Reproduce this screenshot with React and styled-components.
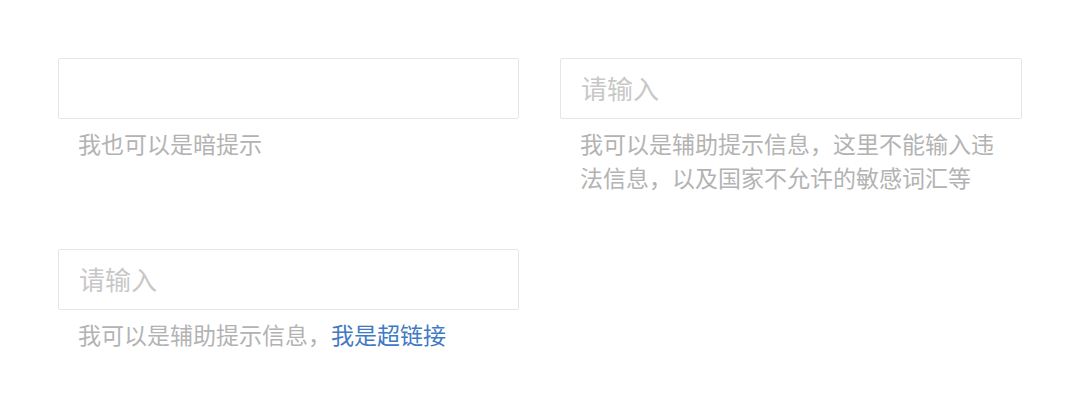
import React from "react";
import styled, { createGlobalStyle } from "styled-components";

const GlobalStyle = createGlobalStyle`
  html, body {
    margin: 0;
    padding: 0;
    background: #ffffff;
  }
  body {
    font-family: "Noto Sans CJK SC", "Noto Sans", sans-serif;
  }
`;

const fields = [
  { placeholder: "", hint: "我也可以是暗提示" },
  {
    placeholder: "请输入",
    hint: "我可以是辅助提示信息，这里不能输入违法信息，以及国家不允许的敏感词汇等",
  },
  { placeholder: "请输入", hint: "我可以是辅助提示信息，", link: "我是超链接" },
];

const App = () => {
  return (
    <>
      <GlobalStyle />
      <Page>
        {fields.map((f, i) => (
          <Field key={i}>
            <Input type="text" placeholder={f.placeholder} />
            <Hint>
              {f.hint}
              {f.link && <Link href="#">{f.link}</Link>}
            </Hint>
          </Field>
        ))}
      </Page>
    </>
  );
};

const Page = styled.main`
  display: grid;
  grid-template-columns: 461px 462px;
  column-gap: 41px;
  row-gap: 55px;
  align-items: start;
  padding: 58px 0 0 58px;
`;

const Field = styled.div`
  display: flex;
  flex-direction: column;
`;

const Input = styled.input`
  box-sizing: border-box;
  height: 61px;
  width: 100%;
  margin: 0;
  padding: 0 20px 2px 20px;
  border: 1px solid #e6e6e6;
  border-radius: 2px;
  background: #ffffff;
  font-family: "Noto Sans CJK SC", "Noto Sans", sans-serif;
  font-size: 26px;
  color: #333333;
  outline: none;

  &::placeholder {
    color: #c8c8c8;
  }
`;

const Hint = styled.p`
  margin: 7px 0 0 0;
  padding: 0 20px;
  font-size: 23px;
  line-height: 34px;
  color: #b3b3b3;
`;

const Link = styled.a`
  color: #3f7ac3;
  text-decoration: none;
`;

export default App;
